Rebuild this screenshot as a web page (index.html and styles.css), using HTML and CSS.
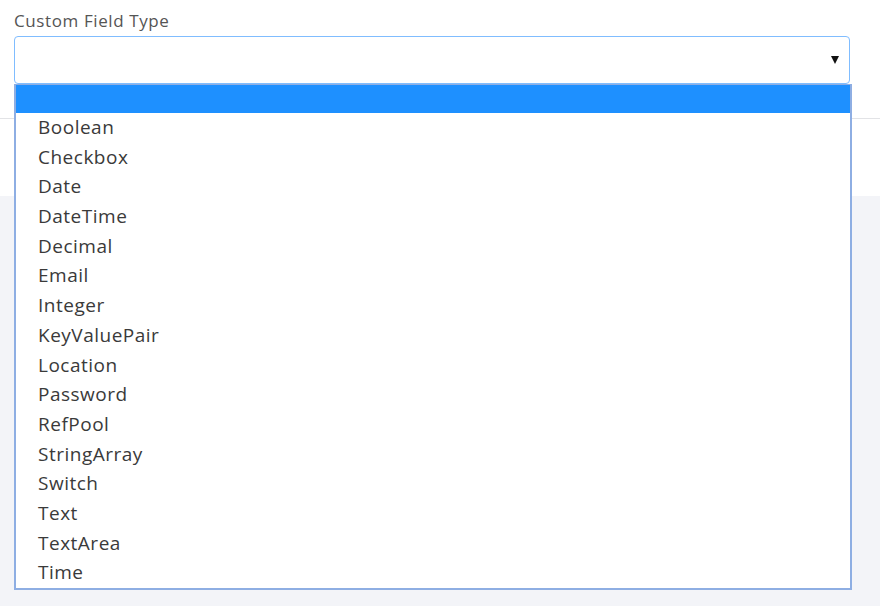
FILE: index.html
```html
<!DOCTYPE html>
<html>
<head>
<meta charset="utf-8">
<link rel="stylesheet" href="styles.css">
</head>
<body>
<div class="page">
  <div class="panel">
    <div class="field">
      <label class="label">Custom Field Type</label>
      <div class="select">
        <span class="arrow"></span>
      </div>
    </div>
  </div>
  <div class="spacer"></div>
  <div class="gray"></div>
  <ul class="dropdown">
    <li class="opt selected">&nbsp;</li>
    <li class="opt">Boolean</li>
    <li class="opt">Checkbox</li>
    <li class="opt">Date</li>
    <li class="opt">DateTime</li>
    <li class="opt">Decimal</li>
    <li class="opt">Email</li>
    <li class="opt">Integer</li>
    <li class="opt">KeyValuePair</li>
    <li class="opt">Location</li>
    <li class="opt">Password</li>
    <li class="opt">RefPool</li>
    <li class="opt">StringArray</li>
    <li class="opt">Switch</li>
    <li class="opt">Text</li>
    <li class="opt">TextArea</li>
    <li class="opt">Time</li>
  </ul>
</div>
</body>
</html>
```

FILE: styles.css
```css
html, body {
  margin: 0;
  padding: 0;
  height: 100%;
}
body {
  font-family: "Open Sans", "Noto Sans", sans-serif;
  background: #f3f4f8;
}
.page {
  position: relative;
  width: 880px;
  height: 606px;
  display: flex;
  flex-direction: column;
  overflow: hidden;
}
.panel {
  background: #fff;
  height: 119px;
  border-bottom: 1px solid #e2e3e6;
  box-sizing: border-box;
}
.field {
  padding: 10px 30px 0 14px;
  display: flex;
  flex-direction: column;
  gap: 4px;
}
.label {
  font-size: 17px;
  letter-spacing: 0.6px;
  color: #555;
  line-height: 22px;
}
.select {
  height: 48px;
  border: 1px solid #80bdff;
  border-radius: 4px;
  box-sizing: border-box;
  background: #fff;
  display: flex;
  align-items: center;
  justify-content: flex-end;
  padding-right: 10px;
}
.arrow {
  width: 0;
  height: 0;
  border-left: 4px solid transparent;
  border-right: 4px solid transparent;
  border-top: 8px solid #111;
}
.spacer {
  height: 77px;
  background: #fff;
}
.gray {
  flex: 1;
  background: #f3f4f8;
}
.dropdown {
  position: absolute;
  left: 14px;
  top: 84px;
  width: 838px;
  margin: 0;
  padding: 0;
  list-style: none;
  background: #fff;
  border: 1px solid #8eaee3;
  border-left-width: 2px;
  border-right-width: 2px;
  border-bottom-width: 2px;
  box-sizing: border-box;
}
.opt {
  height: 29.7px;
  line-height: 29.7px;
  font-size: 19px;
  letter-spacing: 0.5px;
  color: #3a3a3a;
  padding-left: 22px;
}
.opt.selected {
  height: 28px;
  background: #1e90ff;
}
```
